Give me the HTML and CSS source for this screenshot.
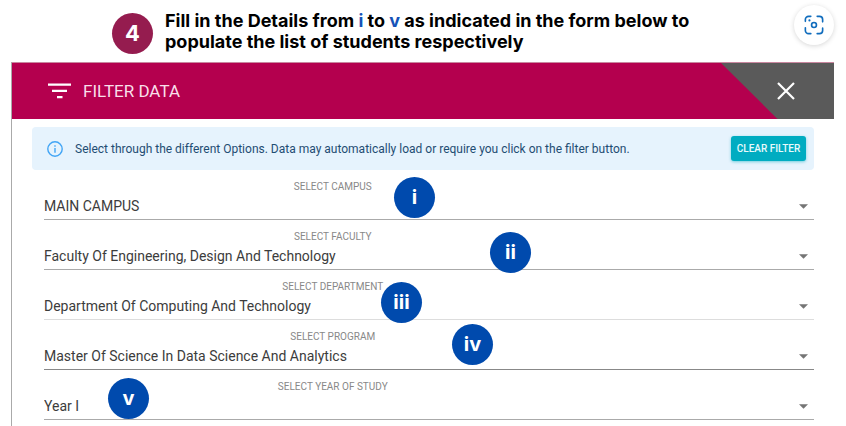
FILE: index.html
```
<!DOCTYPE html>
<html lang="en">
<head>
  <meta charset="UTF-8" />
  <meta name="viewport" content="width=device-width, initial-scale=1.0"/>
  <title>Filter Data</title>
  <link rel="stylesheet" href="styles.css">
</head>
<body>
  <div class="step">
    <span class="step-number">4</span>
    <h1>Fill in the Details from <em>i</em> to <em>v</em> as indicated in the form below to<br>populate the list of students respectively</h1>
    <button type="button" class="lens" aria-label="Visual search">
      <svg width="20" height="20" viewBox="0 0 22 22" fill="none" stroke="#0f6cbd" stroke-width="1.8" stroke-linecap="round">
        <path d="M1.5 7V5A3.500 3.500 0 0 1 5 1.500h2.500M14.500 1.500H17A3.500 3.500 0 0 1 20.500 5v2.500M20.500 14.500V17a3.500 3.500 0 0 1-3.500 3.500h-2.500M7.500 20.500H5A3.500 3.500 0 0 1 1.500 17v-3"/>
        <circle cx="11" cy="11" r="2.700"/>
        <circle cx="6" cy="6" r="1.200" fill="#0f6cbd" stroke="none"/>
      </svg>
    </button>
  </div>

  <main class="dialog">
    <header class="dialog-header">
      <svg width="24" height="16" viewBox="0 0 24 16" fill="#fff">
        <path d="M0 .5h23v2.200H0zM4 6.700h15v2.200H4zM9 13h5.500v2.200H9z"/>
      </svg>
      <h2>FILTER DATA</h2>
      <button type="button" class="close" aria-label="Close">
        <svg width="18" height="18" viewBox="0 0 18 18" stroke="#fff" stroke-width="2.200">
          <path d="M1 1l16 16M17 1L1 17"/>
        </svg>
      </button>
    </header>

    <div class="notice">
      <svg width="16" height="16" viewBox="0 0 16 16" fill="none" stroke="#42a5f5" stroke-width="1.400">
        <circle cx="8" cy="8" r="7.200"/>
        <path d="M8 7v4.800M8 4.200v1.600"/>
      </svg>
      <p>Select through the different Options. Data may automatically load or require you click on the filter button.</p>
      <button type="button" class="clear">CLEAR FILTER</button>
    </div>

    <form class="filters">
      <div class="field">
        <label for="campus">SELECT CAMPUS</label>
        <select id="campus"><option>MAIN CAMPUS</option></select>
        <svg class="arrow" viewBox="0 0 10 5"><path d="M0 0h10L5 5z"/></svg>
        <span class="marker marker-campus">i</span>
      </div>
      <div class="field">
        <label for="faculty">SELECT FACULTY</label>
        <select id="faculty"><option>Faculty Of Engineering, Design And Technology</option></select>
        <svg class="arrow" viewBox="0 0 10 5"><path d="M0 0h10L5 5z"/></svg>
        <span class="marker marker-faculty">ii</span>
      </div>
      <div class="field field-light">
        <label for="department">SELECT DEPARTMENT</label>
        <select id="department"><option>Department Of Computing And Technology</option></select>
        <svg class="arrow" viewBox="0 0 10 5"><path d="M0 0h10L5 5z"/></svg>
        <span class="marker marker-department">iii</span>
      </div>
      <div class="field field-dark">
        <label for="program">SELECT PROGRAM</label>
        <select id="program"><option>Master Of Science In Data Science And Analytics</option></select>
        <svg class="arrow" viewBox="0 0 10 5"><path d="M0 0h10L5 5z"/></svg>
        <span class="marker marker-program">iv</span>
      </div>
      <div class="field">
        <label for="year">SELECT YEAR OF STUDY</label>
        <select id="year"><option>Year I</option></select>
        <svg class="arrow" viewBox="0 0 10 5"><path d="M0 0h10L5 5z"/></svg>
        <span class="marker marker-year">v</span>
      </div>
    </form>
  </main>
</body>
</html>
```

FILE: styles.css
```
* { box-sizing: border-box; }
body { margin: 0; background: #fff; font-family: Roboto, "Liberation Sans", sans-serif; }
h1, h2, p { margin: 0; }
button { border: 0; padding: 0; font-family: inherit; cursor: pointer; }

.step { display: flex; align-items: flex-start; height: 62px; padding: 5px 12px 0 112px; }
.step-number { width: 41px; height: 41px; margin-top: 8px; border-radius: 50%; background: #951c4f; color: #fff; font: bold 22px/40px Inter, sans-serif; text-align: center; flex: none; }
.step h1 { flex: 1; margin: 5px 0 0 12px; font: 700 18px/21px Inter, sans-serif; color: #000; white-space: nowrap; }
.step em { font-style: normal; color: #1552b8; }
.lens { display: flex; align-items: center; justify-content: center; width: 40px; height: 40px; border-radius: 50%; background: #fff; box-shadow: 0 1px 5px rgba(0, 0, 0, .16); flex: none; }

.dialog { margin: 0 12px 0 11px; padding-bottom: 8px; border-left: 1px solid #aaa; }
.dialog-header { display: flex; align-items: center; height: 57px; padding-left: 36px; background: #b4004e; border-top: 1px solid #c9879f; }
.dialog-header h2 { flex: 1; margin-left: 11px; font-size: 17px; line-height: 20px; font-weight: 400; color: #f9dfe9; }
.close { display: flex; align-items: center; justify-content: center; align-self: stretch; width: 113px; padding-left: 17px; background: #5a5a5a; clip-path: polygon(0 0, 100% 0, 100% 100%, 50% 100%); }

.notice { display: flex; align-items: center; height: 43px; margin: 8px 20px 0; padding: 0 8px 0 15px; border-radius: 4px; background: #e6f3fd; }
.notice p { flex: 1; margin-left: 12px; font-size: 12px; color: #1f4d73; white-space: nowrap; }
.clear { width: 75px; height: 25px; border-radius: 3px; background: #00acc1; box-shadow: 0 1px 3px rgba(0, 172, 193, .5); color: #e8fafc; font-size: 10px; font-weight: 500; }

.filters { margin: 0 20px 0 32px; }
.field { position: relative; height: 50px; padding-top: 10px; border-bottom: 1px solid #aaa; }
.field-light { border-color: #ddd; }
.field-dark { border-color: #888; }
.field label { display: block; width: 75%; font-size: 10px; line-height: 13px; text-align: center; color: #888; }
.field select { display: block; width: 100%; height: 26px; padding: 0; border: 0; outline: 0; appearance: none; background: none; font: 14px Roboto, sans-serif; color: #3c3c3c; }
.arrow { position: absolute; right: 6px; bottom: 10px; width: 9px; height: 5px; fill: #757575; pointer-events: none; }

.marker { position: absolute; width: 41px; height: 41px; border-radius: 50%; background: #004aad; color: #fff; font: bold 20px/40px Inter, sans-serif; text-align: center; }
.marker-campus { left: 350px; top: 7px; }
.marker-faculty { left: 446px; top: 12px; }
.marker-department { left: 337px; top: 12px; }
.marker-program { left: 408px; top: 4px; }
.marker-year { left: 64px; top: 8px; }
```
